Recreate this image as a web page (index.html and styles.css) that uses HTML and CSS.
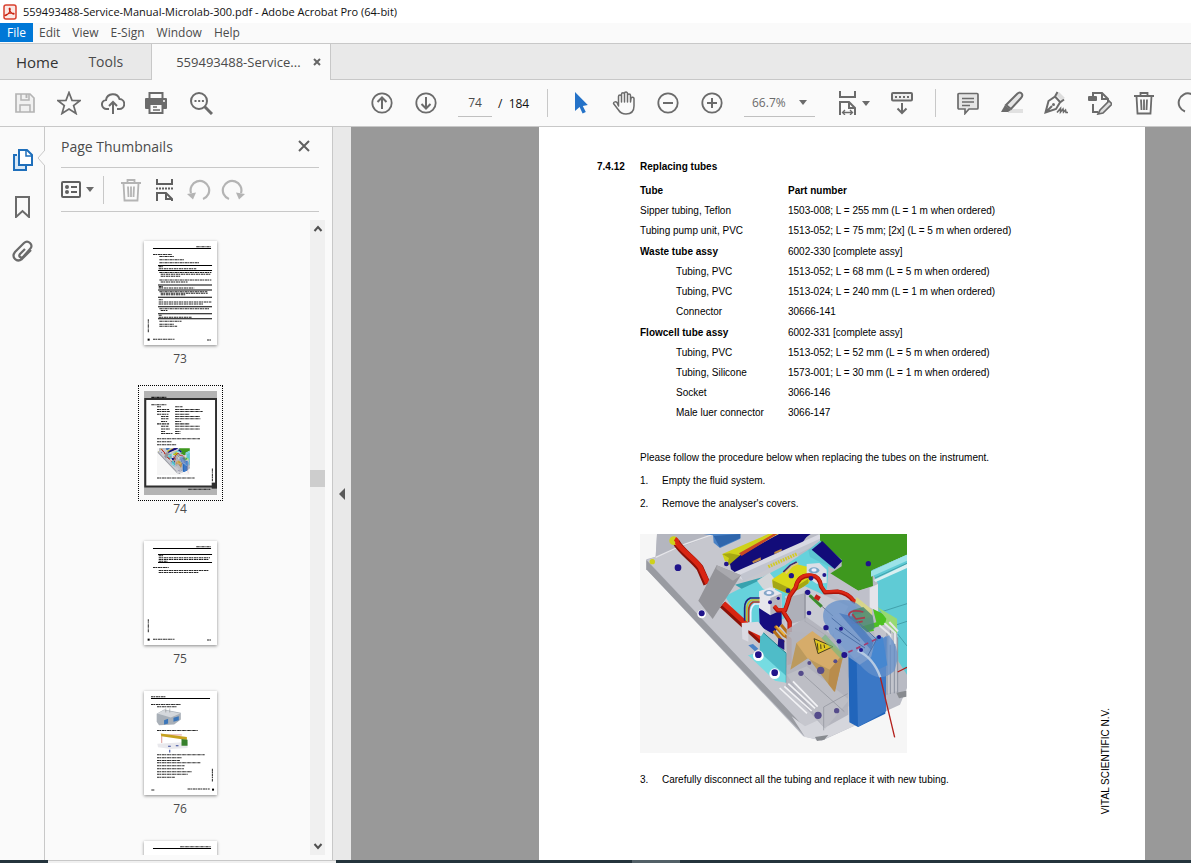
FILE: index.html
```html
<!DOCTYPE html>
<html lang="en">
<head>
<meta charset="utf-8">
<title>559493488-Service-Manual-Microlab-300.pdf - Adobe Acrobat Pro (64-bit)</title>
<link rel="stylesheet" href="styles.css">
</head>
<body>
<svg class="defs" aria-hidden="true">
  <symbol id="trash" viewBox="0 0 24 24"><path d="M2 5h20M8.500 5V2h7v3M4.500 5l1 17.500h13l1-17.500M9 8.500l.5 10.500M12 8.500V19M15 8.500L14.500 19" fill="none" stroke="currentColor" stroke-width="1.800"/></symbol>
  <symbol id="assembly" viewBox="15 18 801 657">
    <path fill="#f6f6f6" d="M15 18h801v657H15z"/>
    <path fill="#b9bbc4" d="M66 18H560L816 130V480L795 530 560 638 505 625 34 124V94L62 86z"/>
    <path fill="#c6c7ce" d="M36 96L240 18H470L560 300 700 560 560 610 507 598z"/>
    <path fill="#b4b6bf" d="M66 18H240L150 52 62 88z"/>
    <path d="M62 88L150 48 232 20" fill="none" stroke="#e6e6ea" stroke-width="4"/>
    <path fill="#999ba1" d="M34 96L507 596 512 627 34 124z"/>
    <path fill="#d5d6dc" d="M470 565l40 30 130-60 60 40-140 62-50-10z"/>
    <path fill="#888b90" d="M540 627l40-6-12 14-22 4zM784 494l30-6v18l-22 5z"/>
    <path fill="#4b83c6" d="M205 18H316V32L255 60 236 44 234 22z"/>
    <path fill="#2f66ac" d="M236 24l18 34 62-28V18z"/>
    <path fill="#66d2dc" d="M270 205L450 112 520 65 580 90V190L400 300 330 300z"/>
    <path fill="#38a2ae" d="M300 170l110-30-90 42z"/>
    <path fill="#d3d6d9" d="M366 158l38-24 16 20v34l-36-6z"/>
    <path fill="#3e981e" d="M552 18H816V80L712 126 714 176 670 188 580 140 620 115 620 95 556 40z"/>
    <path fill="#5fcbd5" d="M708 128L816 80V440L790 400 786 275 730 250 728 165z"/>
    <path fill="#9ce2e8" d="M708 130l108-50v18l-108 48z"/><path fill="#d9eff1" d="M716 156l100-48v12l-94 42z"/>
    <path d="M720 150l96-44M728 255l88-28M788 318l28 36M786 290l30-10" stroke="#338b96" stroke-width="2" fill="none"/>
    <path fill="#bfc0ca" d="M580 132l90 56 55-18V255L655 235 575 190z"/><path fill="#e4e4ea" d="M704 180l25-12v84l-25-14z"/>
    <path fill="#cfd11b" d="M262 78L400 18H430L315 80V105L270 100z"/>
    <path fill="#a6a813" d="M262 78l20 12-6 22 38-10V82l-30-6z"/>
    <path fill="#120c79" d="M285 108L320 78 420 25 440 18H520L500 48 310 140 288 124z"/>
    <path fill="#c94725" d="M312 76L415 18h12L320 84z"/><path fill="#120c79" d="M322 84L432 18h95L490 45 310 128z"/>
    <path fill="#bf8a43" d="M352 100l25-12 1 8-24 10zM418 72l22-10v8l-22 9z"/>
    <path fill="#d8d9e2" d="M294 134L555 18V34L520 58 322 156z"/>
    <path fill="#c2c5cf" d="M315 140L555 32V44L325 160z"/>
    <path d="M400 116l85-38" stroke="#d3ca27" stroke-width="10" stroke-dasharray="5 3"/>
    <path fill="#5ec5d1" d="M520 66l35-28 66 60-26 24-70-35z"/>
    <path fill="#120c79" d="M530 65l32-26 60 60-23 24z"/>
    <path d="M122 40C140 72 174 92 195 120L216 168M262 230L380 338" fill="none" stroke="#8b1208" stroke-width="22"/>
    <path d="M120 38C140 68 176 90 195 116L218 166M266 226L384 334" fill="none" stroke="#d92512" stroke-width="15"/>
    <path fill="#949499" d="M245 112L318 142 233 273 190 218z"/><path fill="#a9a9ae" d="M245 112l73 30-24 16-50-35z"/>
    <circle cx="116" cy="38" r="13" fill="#cfd11b"/><path d="M120 32q10 6 6 18" stroke="#d92512" stroke-width="12" fill="none"/><circle cx="52" cy="101" r="8" fill="#cfd11b"/>
    <path fill="#d8d819" d="M412 154L482 108 548 124 520 166 470 202 414 178z"/><path fill="#a5a614" d="M412 156l58 28 50-32v14l-50 36-56-24z"/>
    <path fill="#c9cbd3" d="M450 205l60-30 130 60-50 90-140-20z"/><path fill="#aeb0b9" d="M450 210l58-14v80l-52 15z"/>
    <path fill="#dcdee6" d="M515 108l38-3 22 20v40l-30 2-30-20z"/>
    <path fill="#e6e6ec" d="M372 190l34-12 34 18v54l-34 14-34-22z"/>
    <path fill="#b4b6c0" d="M406 210l34-14v54l-34 14z"/><ellipse cx="402" cy="195" rx="16" ry="9" fill="#85a6c7"/><ellipse cx="402" cy="194" rx="8" ry="5" fill="#eef"/>
    <ellipse cx="537" cy="127" rx="16" ry="9" fill="#79a6c7"/><ellipse cx="537" cy="126" rx="8" ry="5" fill="#eef"/>
    <g fill="none" stroke-width="5"><path stroke="#22227d" d="M374 210h-28q-18 8-17 30v38"/><path stroke="#c8bd2b" d="M374 216h-24q-15 8-15 28v36"/><path stroke="#b83a26" d="M374 222h-20q-13 8-13 26v34"/><path stroke="#eef" d="M374 228h-15q-12 8-12 26v30"/><path stroke="#4b246a" d="M445 132l20-20 20-10"/><path stroke="#e6c57c" d="M452 136l20-22 18-8"/></g>
    <path fill="#150d80" d="M372 240l34 22 34-16v42l-26 30-40-24z"/>
    <path fill="#4fbcc8" d="M376 306l78 70v88L340 382l34-6z"/><path fill="#76dce2" d="M340 382l36-8 78 70v20l-34-6z"/>
    <path d="M376 306l78 70v88" stroke="#278491" stroke-width="3" fill="none"/>
    <path fill="#dadae2" d="M320 285l50-4 20 26-12 18-38-18v34l-18-8z"/>
    <path fill="#4b83c6" d="M340 352l14-4 16 14-10 8z"/>
    <path d="M420 294l26 28 20 12M416 308l30 36M438 290l25 30" stroke="#b56f19" stroke-width="9"/><path d="M424 294l26 28" stroke="#efb43b" stroke-width="5"/>
    <path fill="#20157d" d="M430 330l18 6v30l-20-12z"/><path fill="#b3503a" d="M455 322l15 10v75l-13 5z" opacity=".75"/>
    <g fill="none" stroke="#a91408" stroke-width="13" stroke-linejoin="round"><path d="M418 235l10 12h22q8-20 14-42l18-26q8-40 48-36 24 2 28 32l12 18 38-2q30 4 48 28l24 14 8 20M444 250l20 32v30"/></g>
    <g fill="none" stroke="#dc2815" stroke-width="8" stroke-linejoin="round"><path d="M418 233l10 12h22q8-20 14-42l18-26q8-40 48-36 24 2 28 32l12 18 38-2q30 4 48 28l24 14 8 20M444 248l20 32v30"/></g>
    <path d="M524 202l36 34" stroke="#3a9b26" stroke-width="9"/><path d="M540 205l14 8" stroke="#c41d17" stroke-width="14"/>
    <path d="M510 190l170 150M510 190v92M510 280l75 50" stroke="#4b4f5a" stroke-width="2" fill="none"/>
    <path fill="#b0b2bb" opacity=".88" d="M455 305l60-38 70 50 55 62V560l-72 40-115-125z"/>
    <path fill="#bfc0c7" d="M455 440l60-25 128 100-73 88z" opacity=".8"/>
    <g stroke="#f2f2f5" stroke-width="5"><path d="M434 480l82 76M448 475l82 74M460 467l80 74M474 460l74 76"/></g>
    <path d="M508 443l120 108M566 607v-70l72-40" stroke="#8d8f98" stroke-width="2" fill="none"/>
    <path fill="#bc9a5d" d="M484 345l-18 80 54-35 78 102 28-112z"/><path fill="#d6ac6a" d="M484 345l48-36 92 68-40 48-68-36z"/><path fill="#b98c4c" d="M584 425l40-45-24 112-20-25z"/>
    <path fill="#dec51e" stroke="#4a4021" stroke-width="3" d="M537 332l57 24-45 21z"/><path d="M547 346l2 21m8-18l1 14m9-13l2 10" stroke="#4a4021" stroke-width="3"/>
    <path fill="#d7d58b" d="M665 207l46 38v22l-24 4-28-42z"/>
    <path fill="#4cc120" d="M714 243l42 20v38l-72 14-16-16 56-16z"/><path fill="#97d973" d="M728 238l58 34v44l-42-4 10-40z"/>
    <path fill="#c2c4cc" d="M715 300l40-12 34 50v150l-35 10z"/><g stroke="#8b919e" stroke-width="3"><path d="M756 310v190M766 305v193M778 308v188M788 328v166"/></g><path d="M733 292l33 28v30M748 286l32 28v34M763 282l26 28" stroke="#e5e7e9" stroke-width="6" fill="none"/>
    <path fill="#2165bb" d="M640 372l20 20 95-65-4 230-82 40-26-14z"/><path fill="#3b78c6" d="M665 395l88-70v225l-84 47z"/>
    <path fill="#6490cb" opacity=".75" d="M566 278q-10-42 34-58 44-12 76 14l16 18-45 12 65 80 50-22q30 34 25 74l-8 32q-44 40-90-3L585 318z"/>
    <path fill="#4c8a70" opacity=".85" d="M655 245l30-8 28 26 6 38-28 14-44-40z"/>
    <path d="M685 252q-40-10-44 10l12 24 30-6M652 258l10 15 28-4" fill="none" stroke="#a83c4c" stroke-width="5"/>
    <path fill="#7f9fce" opacity=".85" d="M578 270l44-18 112 90-20 42-40 26-60-42z"/>
    <path fill="#4375ba" d="M612 255l38 10 66 76-8 25z" opacity=".7"/><path fill="#4687d0" d="M708 390l15-65 20 2 14 85-30 14z"/>
    <path d="M590 270l85 70M600 300l90 60M650 265l78 72M730 325l-35 64" fill="none" stroke="#4c70a6" stroke-width="3"/><path d="M565 325l60 64" stroke="#76b97b" stroke-width="16" opacity=".65"/>
    <path d="M640 373l95-45" stroke="#a33d70" stroke-width="5" stroke-dasharray="14 12"/>
    <path d="M668 368q48 22 68 80" fill="none" stroke="#b5cae3" stroke-width="7"/><path d="M736 448L779 628M788 432l28-14" stroke="#b3201c" stroke-width="4"/>
    <g fill="#20148b"><circle cx="129" cy="119" r="10"/><circle cx="700" cy="107" r="8"/><circle cx="469" cy="143" r="8"/><circle cx="528" cy="151" r="7"/><circle cx="459" cy="188" r="7"/><circle cx="518" cy="193" r="8"/><circle cx="568" cy="141" r="6"/><circle cx="430" cy="211" r="5"/><circle cx="405" cy="223" r="6"/><circle cx="522" cy="255" r="7"/><circle cx="573" cy="299" r="8"/><circle cx="618" cy="302" r="6"/><circle cx="628" cy="381" r="9"/><circle cx="678" cy="366" r="6"/><circle cx="732" cy="327" r="6"/><circle cx="612" cy="340" r="7"/><circle cx="274" cy="108" r="7"/></g>
    <g fill="#fff"><circle cx="200" cy="258" r="13"/><circle cx="370" cy="383" r="16"/><circle cx="419" cy="437" r="16"/></g>
    <g fill="#20148b"><circle cx="200" cy="256" r="9"/><circle cx="370" cy="380" r="10"/><circle cx="419" cy="434" r="10"/></g>
    <g fill="#554c8b"><circle cx="498" cy="436" r="8"/><circle cx="549" cy="562" r="11"/><circle cx="605" cy="548" r="8"/><circle cx="557" cy="427" r="11"/><circle cx="523" cy="405" r="6"/><circle cx="601" cy="400" r="6"/></g>
  </symbol>
</svg>
<div class="app">
  <header class="titlebar">
    <svg class="logo" viewBox="0 0 14 16"><rect x="1" y="1" width="12" height="14" rx="2" fill="#fbe9e6" stroke="#d9402f" stroke-width="1.500"/><path d="M3 11.500Q7 9 7.200 5.500 7 3.500 6.200 4.500 6 6.500 8 8.500T11 10Q11.500 9 9 9T3.500 10.500 3 11.500" fill="none" stroke="#c9220f" stroke-width="1.200"/></svg>
    <span>559493488-Service-Manual-Microlab-300.pdf - Adobe Acrobat Pro (64-bit)</span>
  </header>
  <nav class="menubar" aria-label="Menu">
    <button class="current">File</button><button>Edit</button><button>View</button><button>E-Sign</button><button>Window</button><button>Help</button>
  </nav>
  <div class="tabs">
    <button class="tab home">Home</button><button class="tab">Tools</button>
    <div class="doc-tab"><button class="tab-name">559493488-Service...</button><button class="tab-close" aria-label="Close tab"><svg viewBox="0 0 8 8"><path d="M1 1l6 6M7 1L1 7" stroke="#666" stroke-width="2"/></svg></button></div>
  </div>
  <div class="toolbar">
    <div class="group">
      <button class="tool faded" aria-label="Save"><svg viewBox="0 0 24 24"><path d="M3 3h14l4 4v14H3z" fill="#f1f1f1" stroke="currentColor" stroke-width="1.700"/><path d="M8 3v6h8V3M7 21v-7h10v7" fill="none" stroke="currentColor" stroke-width="1.500"/><path d="M12.500 3h2v4h-2z" fill="currentColor"/></svg></button>
      <button class="tool" aria-label="Star"><svg viewBox="0 0 24 24"><path d="M12 1.500l3 7.800 8 .3-6.400 5L19 22.500 12 18l-7 4.500 2.300-7.900L1 9.600l8-.3z" fill="none" stroke="currentColor" stroke-width="1.700"/></svg></button>
      <button class="tool" aria-label="Upload"><svg viewBox="0 0 24 24"><path d="M8 18H6a4.500 4.500 0 01-1-9 7 7 0 0113.500-1A5 5 0 0118 18h-2M12 23V11.500M8 15l4-4 4 4" fill="none" stroke="currentColor" stroke-width="2"/></svg></button>
      <button class="tool" aria-label="Print"><svg viewBox="0 0 24 24"><path d="M4.500 8V2h13v6" fill="none" stroke="currentColor" stroke-width="2"/><path d="M0 8q0-1 1-1h20q1 0 1 1v9q0 1-1 1H1q-1 0-1-1z" fill="currentColor"/><path d="M4.500 13h13v9h-13z" fill="#fafafa" stroke="currentColor" stroke-width="2"/><path d="M8 16h4M8 19h7" stroke="currentColor" stroke-width="1.400"/><circle cx="19" cy="10" r="1" fill="#fff"/></svg></button>
      <button class="tool" aria-label="Find"><svg viewBox="0 0 24 24"><circle cx="10" cy="10" r="8" fill="none" stroke="currentColor" stroke-width="2"/><path d="M15.500 15.500l7.500 7.500" stroke="currentColor" stroke-width="3"/><path d="M5.500 10H15" stroke="currentColor" stroke-width="2" stroke-dasharray="2 1.700"/></svg></button>
    </div>
    <div class="group paging">
      <button class="tool" aria-label="Previous page"><svg viewBox="0 0 24 24"><circle cx="12" cy="12" r="9.700" fill="none" stroke="currentColor" stroke-width="1.800"/><path d="M12 18V7M7.500 11L12 6.500l4.500 4.500" fill="none" stroke="currentColor" stroke-width="2"/></svg></button>
      <button class="tool" aria-label="Next page"><svg viewBox="0 0 24 24"><circle cx="12" cy="12" r="9.700" fill="none" stroke="currentColor" stroke-width="1.800"/><path d="M12 6v11M7.500 13l4.500 4.500 4.500-4.500" fill="none" stroke="currentColor" stroke-width="2"/></svg></button>
      <input class="page-no" value="74" aria-label="Page number"><span class="total">/&nbsp; 184</span>
    </div>
    <div class="group nav">
      <button class="tool" aria-label="Select"><svg viewBox="0 0 24 24"><path d="M7 1v19l4.600-4 3 6.500 3.200-1.500-3-6 5-1z" fill="#2472c8"/></svg></button>
      <button class="tool" aria-label="Pan"><svg viewBox="0 0 24 24"><path d="M6.500 15V5.500a1.500 1.500 0 013 0V11 3.300a1.500 1.500 0 013 0V11 2.500a1.500 1.500 0 013 0V11 4.500a1.500 1.500 0 013 0V11l.5-3.500a1.500 1.500 0 013 .3V15c0 5-3 8-8 8-4 0-6-1.500-7.500-4l-5-6.500c0-2 2.500-2 3.500-1z" fill="none" stroke="currentColor" stroke-width="1.500" stroke-linejoin="round"/></svg></button>
      <button class="tool" aria-label="Zoom out"><svg viewBox="0 0 24 24"><circle cx="12" cy="12" r="9.700" fill="none" stroke="currentColor" stroke-width="1.800"/><path d="M7 12h10" stroke="currentColor" stroke-width="2"/></svg></button>
      <button class="tool" aria-label="Zoom in"><svg viewBox="0 0 24 24"><circle cx="12" cy="12" r="9.700" fill="none" stroke="currentColor" stroke-width="1.800"/><path d="M7 12h10M12 7v10" stroke="currentColor" stroke-width="2"/></svg></button>
      <button class="zoom-level"><span>66.7%</span><i class="caret"></i></button>
      <button class="tool fit" aria-label="Fit width"><svg viewBox="0 0 24 24"><path d="M4 0v6h15V0M4 24V11h9l6 6v7M13 11v6h6" fill="none" stroke="currentColor" stroke-width="2"/><path d="M6.500 21.500h10M9 19l-2.500 2.500L9 24m5-5l2.500 2.500L14 24" fill="none" stroke="currentColor" stroke-width="1.300"/></svg><i class="caret"></i></button>
      <button class="tool" aria-label="Scrolling"><svg viewBox="0 0 24 24"><rect x="2" y="2" width="20" height="7.500" rx="1" fill="#eee" stroke="currentColor" stroke-width="2"/><path d="M5 6h14" stroke="currentColor" stroke-width="2" stroke-dasharray="2"/><path d="M12 12v10M7.500 17.500L12 22l4.500-4.500" fill="none" stroke="currentColor" stroke-width="2"/></svg></button>
    </div>
    <div class="group marks">
      <button class="tool" aria-label="Comment"><svg viewBox="0 0 24 24"><path d="M3 2.500h18q1 0 1 1V17q0 1-1 1H13l-4 4.500V18H3q-1 0-1-1V3.500q0-1 1-1z" fill="#e5e5e5" stroke="currentColor" stroke-width="1.700"/><path d="M6 7.500h12M6 11h12M6 14.500h8" stroke="currentColor" stroke-width="1.300"/></svg></button>
      <button class="tool" aria-label="Highlight"><svg viewBox="0 0 24 24"><path d="M8 18h15v4H8z" fill="#e1e1e1"/><path d="M6 14L17 3q3-3 5 0 1 2-1 4L11 18z" fill="#e5e5e5" stroke="currentColor" stroke-width="2"/><path d="M5 14l6 5-3 2H1z" fill="currentColor"/></svg></button>
      <button class="tool" aria-label="Sign"><svg viewBox="0 0 24 24"><path d="M15 1l6 6-4 2-5-5z" fill="#ddd"/><path d="M13.500 1L11 5.500 4.500 10 1.500 21.500 12 18l4-6.500 4-3M11 5.500l5.500 6M1.500 21.500L8 15" fill="none" stroke="currentColor" stroke-width="2"/><path d="M13 21.500l3.500-4V21l2.500-3 .5 3 2-2 .5 2.500H24" fill="none" stroke="currentColor" stroke-width="1.600"/><circle cx="9.500" cy="13.500" r="1.500" fill="currentColor"/></svg></button>
      <button class="tool" aria-label="Edit PDF"><svg viewBox="0 0 24 24"><path d="M5 5V2h9l6 6v3M14 2v6h6M5 13v8h5" fill="none" stroke="currentColor" stroke-width="2"/><rect x="0" y="5" width="9" height="5" rx="1" fill="currentColor"/><path d="M12 19L21 10l3 3-9 9-5 1z" fill="#ddd" stroke="currentColor" stroke-width="1.700"/></svg></button>
      <button class="tool" aria-label="Delete"><svg><use href="#trash"/></svg></button>
      <button class="tool" aria-label="Rotate"><svg viewBox="0 0 24 24"><path d="M9 20.500A9.300 9.300 0 1121 14" fill="none" stroke="currentColor" stroke-width="2"/><path d="M15 12h8l-3 5z" fill="currentColor"/></svg></button>
    </div>
  </div>
  <main class="workspace">
    <nav class="rail" aria-label="Navigation panes">
      <button class="pane-button active" aria-label="Page thumbnails"><svg viewBox="0 0 24 24"><path d="M6 7H3v15h12v-4" fill="#d9e8f6" stroke="#1f6fbb" stroke-width="2"/><path d="M8 2h8l5 5v10H8z" fill="#fff" stroke="#1f6fbb" stroke-width="2"/><path d="M15 2v6h6" fill="none" stroke="#1f6fbb" stroke-width="1.500"/></svg></button>
      <button class="pane-button" aria-label="Bookmarks"><svg viewBox="0 0 24 24"><path d="M5 3h13v20l-6.500-6L5 23z" fill="none" stroke="currentColor" stroke-width="2"/></svg></button>
      <button class="pane-button" aria-label="Attachments"><svg viewBox="0 0 24 24"><path d="M14 9l-5 5q-1.500 2 0 3t3 0l7-8q3-3 0-6t-6 0l-9 9q-3 4 0 7t7 0l9-9" fill="none" stroke="currentColor" stroke-width="2.200"/></svg></button>
    </nav>
    <aside class="panel">
      <svg class="notch" viewBox="0 0 8 16"><path d="M8 0L1 8l7 8" fill="#fafafa" stroke="#c8c8c8"/></svg>
      <div class="panel-head"><h2>Page Thumbnails</h2><button class="close" aria-label="Close"><svg viewBox="0 0 12 12"><path d="M1 1l10 10M11 1L1 11" stroke="#606060" stroke-width="2"/></svg></button></div>
      <div class="panel-tools">
        <button class="options" aria-label="Options"><svg viewBox="0 0 24 24"><rect x="3" y="4" width="18" height="15" rx="1" fill="none" stroke="currentColor" stroke-width="2"/><circle cx="8" cy="9" r="2" fill="currentColor"/><circle cx="8" cy="14" r="2" fill="currentColor"/><path d="M12 9h6M12 14h6" stroke="currentColor" stroke-width="2"/></svg><i class="caret"></i></button>
        <button class="mini faded first" aria-label="Delete pages"><svg><use href="#trash"/></svg></button>
        <button class="mini" aria-label="Insert pages"><svg viewBox="0 0 24 24"><path d="M4 1v5h15V1M4 23v-8h9l6 6v2M13 15v6h6" fill="none" stroke="currentColor" stroke-width="2"/><path d="M3 10.500h17" stroke="currentColor" stroke-width="2" stroke-dasharray="2 1"/></svg></button>
        <button class="mini faded" aria-label="Rotate left"><svg viewBox="0 0 24 24"><path d="M16 21a9.300 9.300 0 10-12-6" fill="none" stroke="currentColor" stroke-width="2.200"/><path d="M0 16l9-1.500-3 7z" fill="currentColor"/></svg></button>
        <button class="mini faded" aria-label="Rotate right"><svg viewBox="0 0 24 24"><path d="M8 21a9.300 9.300 0 1112-6" fill="none" stroke="currentColor" stroke-width="2.200"/><path d="M24 16l-9-1.500 3 7z" fill="currentColor"/></svg></button>
      </div>
      <div class="thumbs">
        <div class="thumb-list">
          <a class="thumb" href="#p73"><svg viewBox="41 33 216 310"><g class="rule"><path d="M67 55h173M82 106h161M82 121h161M82 164h161M82 179h161M82 201h161M82 229h161M82 250h161M82 265h161"/></g><g class="ink"><path d="M196 50h44M67 73h56M86 79h44M86 89h75M86 98h118M84 110h12M84 116h112M86 127h155M90 132h150M90 138h58M86 149h155M90 155h80M84 169h12M84 173h106M86 184h144M90 189h140M90 193h75M84 208h12M84 215h157M84 221h132M86 235h150M90 240h20M84 254h10M84 260h98M86 272h66M86 281h44M86 287h54M67 326h64M228 328h12M53 266v40"/></g><path d="M51 324h6v6h-6z"/></svg><span>73</span></a>
          <a class="thumb selected" href="#p74" aria-current="page"><svg viewBox="41 39 216 310"><path fill="#b3b3b3" d="M39 37h222v314H39z"/><path fill="#fff" d="M44 64h214v260H44z"/><g class="ink"><path d="M62 58h46M62 80h46M79 86h12M133 86h22M79 94h36M133 94h74M79 100h38M133 100h82M79 108h34M133 108h42M91 115h22M133 115h75M91 122h22M133 122h76M91 130h18M133 130h18M79 137h36M133 137h42M91 144h22M133 144h75M91 152h26M133 152h75M91 160h12M133 160h16M91 166h34M133 166h16M79 181h128M79 190h45M79 199h57M79 298h112M172 332h66"/><path d="M244 270v38"/></g><use href="#assembly" x="79" y="209" width="98" height="82"/><path fill="none" stroke="#2e2e2e" stroke-width="6" d="M44 63h211v261H44z"/><path fill="#2e2e2e" d="M242 312h16v18h-16z"/></svg><span>74</span></a>
          <a class="thumb" href="#p75"><svg viewBox="41 33 216 310"><g class="rule"><path d="M67 55h173M82 73h161M82 97h161"/></g><g class="ink"><path d="M196 50h44M84 77h14M84 83h153M84 88h150M84 93h26M67 112h47M84 121h150M84 127h120M67 326h64M228 328h12M53 266v40"/></g><path d="M51 324h6v6h-6z"/></svg><span>75</span></a>
          <a class="thumb" href="#p76"><svg viewBox="41 33 216 310"><g class="rule"><path d="M61 55h176"/></g><g class="ink"><path d="M61 50h45M61 73h90M79 80h60M79 151h122M79 223h142M79 232h75M79 240h68M79 247h130M79 256h82M79 265h80M79 274h104M79 281h92M79 290h54M62 328h10M170 325h66M244 265v38"/></g><path fill="#a9b0b8" d="M78 101l22-13 50 10v20l-20 15-45 2-7-10z"/><path fill="#d5d8dc" d="M80 100l20-10 48 10-28 12z"/><path fill="#3b76ba" d="M100 120l12-4v14l-12 3zM128 113l16-5v12l-16 5z"/><path d="M105 97V85M117 97V85" stroke="#555"/><path fill="#e9e9ed" d="M80 190l90-5v18l-50 3-38-5z"/><path d="M93 188v-24h60" stroke="#d16a65" stroke-width="2" fill="none"/><path fill="#c6a11e" d="M90 160l78 10v9l-76-11z"/><path fill="#37802d" d="M152 176l18 2v18h-18z"/><path d="M112 198h8M135 196h8M117 208v8" stroke="#33459b" stroke-width="3"/><path d="M243 324h6v6h-6z"/></svg><span>76</span></a>
          <a class="thumb" href="#p77" aria-label="Page 77"><svg viewBox="41 33 216 310"><g class="rule"><path d="M67 55h173"/></g><path class="ink" d="M148 50h92"/></svg></a>
        </div>
        <div class="scrollbar"><svg viewBox="0 0 10 10"><path d="M1.500 7L5 3l3.500 4" fill="none" stroke="#505050" stroke-width="2"/></svg><div class="track"><div class="grip"></div></div><svg viewBox="0 0 10 10"><path d="M1.500 3L5 7l3.500-4" fill="none" stroke="#505050" stroke-width="2"/></svg></div>
      </div>
    </aside>
    <button class="splitter" aria-label="Collapse panel"><svg viewBox="0 0 8 12"><path d="M7 0v12L1 6z" fill="#5a5a5a"/></svg></button>
    <section class="viewer">
      <article class="page">
        <div class="content">
          <h1><span>7.4.12</span>Replacing tubes</h1>
          <div class="body">
            <table>
              <thead><tr class="main"><th>Tube</th><th>Part number</th></tr></thead>
              <tbody>
                <tr><td>Sipper tubing, Teflon</td><td>1503-008; L = 255 mm (L = 1 m when ordered)</td></tr>
                <tr><td>Tubing pump unit, PVC</td><td>1513-052; L = 75 mm; [2x] (L = 5 m when ordered)</td></tr>
                <tr class="main"><th>Waste tube assy</th><td>6002-330 [complete assy]</td></tr>
                <tr class="sub"><td>Tubing, PVC</td><td>1513-052; L = 68 mm (L = 5 m when ordered)</td></tr>
                <tr class="sub"><td>Tubing, PVC</td><td>1513-024; L = 240 mm (L = 1 m when ordered)</td></tr>
                <tr class="sub"><td>Connector</td><td>30666-141</td></tr>
                <tr class="main"><th>Flowcell tube assy</th><td>6002-331 [complete assy]</td></tr>
                <tr class="sub"><td>Tubing, PVC</td><td>1513-052; L = 52 mm (L = 5 m when ordered)</td></tr>
                <tr class="sub"><td>Tubing, Silicone</td><td>1573-001; L = 30 mm (L = 1 m when ordered)</td></tr>
                <tr class="sub"><td>Socket</td><td>3066-146</td></tr>
                <tr class="sub"><td>Male luer connector</td><td>3066-147</td></tr>
              </tbody>
            </table>
            <p>Please follow the procedure below when replacing the tubes on the instrument.</p>
            <ol>
              <li><span>1.</span>Empty the fluid system.</li>
              <li><span>2.</span>Remove the analyser's covers.</li>
            </ol>
            <svg class="figure" viewBox="15 18 801 657" role="img" aria-label="Instrument tubing"><use href="#assembly" x="15" y="18" width="801" height="657"/></svg>
            <ol><li><span>3.</span>Carefully disconnect all the tubing and replace it with new tubing.</li></ol>
          </div>
        </div>
        <div class="imprint">VITAL SCIENTIFIC N.V.</div>
      </article>
    </section>
  </main>
  <footer class="taskbar"><i class="start"></i><i class="gap"></i><i class="apps"></i><i class="running"></i></footer>
</div>
</body>
</html>
```
FILE: styles.css
```css
* { box-sizing: border-box; }
body { margin: 0; font: 12px "Open Sans", "Noto Sans", sans-serif; color: #4b4b4b; background: #fafafa; }
button, input { font: inherit; color: inherit; border: 0; background: none; padding: 0; margin: 0; }
.defs { display: block; width: 0; height: 0; }
.app { height: 100vh; display: flex; flex-direction: column; overflow: hidden; }

.titlebar { flex: none; height: 23px; display: flex; align-items: center; gap: 6px; padding-left: 3px; background: #fff; color: #111; font-size: 11px; white-space: nowrap; }
.logo { width: 14px; height: 16px; }
.menubar { flex: none; height: 20px; padding-bottom: 1px; display: flex; }
.menubar button { padding: 0 6px; line-height: 19px; }
.menubar .current { padding: 0 7px; background: #0078d7; color: #fff; }

.tabs { flex: none; height: 37px; display: flex; align-items: stretch; background: #e9e9e9; border-top: 1px solid #c8c8c8; border-bottom: 1px solid #c8c8c8; }
.tab { padding: 0 14px; font-size: 14px; }
.tab.home { padding: 0 16px; font-size: 15px; color: #333; }
.doc-tab { display: flex; align-items: center; gap: 12px; margin: 0 0 -1px 14px; padding: 0 9px 0 24px; background: #fafafa; border: solid #c8c8c8; border-width: 0 1px; }
.tab-name { font-size: 13px; white-space: nowrap; }
.tab-close svg { display: block; width: 8px; height: 8px; }

.toolbar { flex: none; height: 47px; display: flex; align-items: center; padding-left: 3px; border-bottom: 1px solid #c8c8c8; overflow: hidden; color: #6b6b6b; }
.group { flex: none; display: flex; align-items: center; }
.tool { flex: none; width: 44px; height: 28px; display: flex; align-items: center; justify-content: center; }
.tool svg, .mini svg, .options svg, .pane-button svg { flex: none; width: 24px; height: 24px; }
.faded { color: #b4b4b4; }
.paging { margin-left: 137px; }
.page-no { width: 34px; height: 28px; margin-left: 10px; text-align: center; font-size: 12px; border-bottom: 1px solid #c0c0c0; color: #4b4b4b; }
.total { margin-left: 6px; width: 30px; color: #111; white-space: nowrap; }
.nav { margin-left: 19px; padding-left: 10px; }
.nav, .marks { border-left: 1px solid #c8c8c8; }
.zoom-level { display: flex; align-items: center; justify-content: space-between; width: 71px; height: 28px; padding: 0 8px; margin: 0 10px; border-bottom: 1px solid #c0c0c0; }
.caret { flex: none; width: 8px; border: 4px solid transparent; border-top: 5px solid #6b6b6b; border-bottom: 0; }
.tool.fit { gap: 2px; width: 55px; }
.marks { margin-left: 11px; padding-left: 10px; }

.workspace { flex: 1; min-height: 0; display: flex; }
.rail { flex: none; width: 45px; padding-top: 10px; border-right: 1px solid #c8c8c8; color: #6b6b6b; }
.pane-button { display: flex; align-items: center; justify-content: center; width: 45px; height: 46px; }
.panel { position: relative; flex: none; width: 288px; display: flex; flex-direction: column; border-right: 1px solid #c8c8c8; }
.notch { position: absolute; left: -8px; top: 23px; width: 8px; height: 16px; }
.panel-head { flex: none; height: 41px; margin: 0 13px 0 16px; padding: 0 9px 2px 0; display: flex; align-items: center; justify-content: space-between; border-bottom: 1px solid #c8c8c8; }
h2 { margin: 0; font-size: 14px; font-weight: 400; }
.close svg { display: block; width: 12px; height: 12px; }
.panel-tools { flex: none; height: 44px; margin: 0 13px 0 16px; display: flex; align-items: center; border-bottom: 1px solid #c8c8c8; color: #606060; }
.options { display: flex; align-items: center; gap: 3px; width: 43px; height: 28px; border-right: 1px solid #c8c8c8; }
.options svg { margin-left: -2px; }
.mini { width: 34px; height: 28px; display: flex; align-items: center; justify-content: center; }
.mini.faded { color: #b4b4b4; }
.mini.first { margin-left: 10px; }
.thumbs { flex: 1; min-height: 0; display: flex; justify-content: space-between; margin: 8px 7px 5px 0; }
.thumb-list { flex: 1; overflow: hidden; padding: 21px 0 0 5px; display: flex; flex-direction: column; align-items: center; }
.thumb { flex: none; width: 73px; height: 150px; text-align: center; text-decoration: none; color: #4b4b4b; line-height: 16px; }
.thumb svg { display: block; width: 73px; height: 104px; margin-bottom: 6px; background: #fff; box-shadow: 0 1px 3px #888; }
.thumb.selected svg { outline: 1px dotted #000; outline-offset: 5px; box-shadow: none; }
.rule path { stroke: #000; stroke-width: 3; }
.ink { fill: none; stroke: #000; stroke-width: 3; stroke-dasharray: 8 1 4 2; opacity: .85; }
.scrollbar { flex: none; width: 15px; display: flex; flex-direction: column; align-items: center; padding: 4px 0; background: #f0f0f0; }
.scrollbar svg { flex: none; width: 10px; height: 10px; }
.track { flex: 1; width: 100%; padding-top: 236px; }
.grip { height: 17px; background: #cdcdcd; }
.splitter { flex: none; width: 18px; background: #e9e9e9; display: flex; align-items: center; justify-content: center; }
.splitter svg { width: 8px; height: 12px; }

.viewer { flex: 1; display: flex; padding: 0 46px 0 188px; background: #999; overflow: hidden; }
.page { flex: 1; display: flex; justify-content: space-between; background: #fff; color: #000; font: 10px/20px "Liberation Sans", Arial, sans-serif; }
.content { padding: 30px 0 0 58px; }
h1 { display: flex; margin: 0 0 3px; font-size: 10px; line-height: 20px; }
h1 span { width: 43px; }
.body { padding-left: 43px; }
table { border-collapse: collapse; }
td, th { height: 20px; padding: 0; text-align: left; white-space: nowrap; }
.main > * { height: 21px; }
th:first-child, td:first-child { width: 148px; }
.sub td:first-child { padding-left: 36px; }
p { margin: 25px 0 3px; }
ol { list-style: none; margin: 0; padding: 0; }
li { display: flex; margin-bottom: 3px; }
li span { width: 22px; }
.figure { display: block; width: 267px; height: 219px; margin: 20px 0 17px; }
.imprint { align-self: flex-end; writing-mode: vertical-rl; transform: rotate(180deg); margin: 0 29px 46px 0; white-space: nowrap; }

.taskbar { flex: none; height: 3px; display: flex; background: #24343c; }
.start { width: 48px; }
.gap { width: 288px; background: #f0f0f0; border-top: 1px solid #c8c8c8; }
.apps { width: 296px; }
.running { width: 48px; background: #526067; }
```
